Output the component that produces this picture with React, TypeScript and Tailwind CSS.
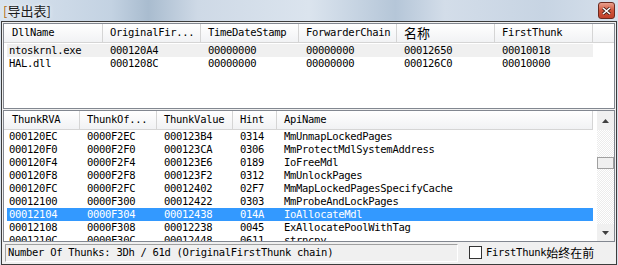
const mono = "font-['DejaVu_Sans_Mono',monospace] text-[10.5px] tracking-[-0.3px]";
const cjk = "font-['Noto_Sans_CJK_SC',sans-serif]";

const topCols = [
  { title: 'DllName', w: 99 },
  { title: 'OriginalFir...', w: 98 },
  { title: 'TimeDateStamp', w: 98 },
  { title: 'ForwarderChain', w: 98 },
  { title: '名称', w: 98, cjk: true },
  { title: 'FirstThunk', w: 98 },
];

const topRows = [
  ['ntoskrnl.exe', '000120A4', '00000000', '00000000', '00012650', '00010018'],
  ['HAL.dll', '0001208C', '00000000', '00000000', '000126C0', '00010000'],
];

const bottomCols = [
  { title: 'ThunkRVA', w: 76 },
  { title: 'ThunkOf...', w: 77 },
  { title: 'ThunkValue', w: 76 },
  { title: 'Hint', w: 44 },
  { title: 'ApiName', w: 316 },
];

const bottomRows = [
  ['000120EC', '0000F2EC', '000123B4', '0314', 'MmUnmapLockedPages'],
  ['000120F0', '0000F2F0', '000123CA', '0306', 'MmProtectMdlSystemAddress'],
  ['000120F4', '0000F2F4', '000123E6', '0189', 'IoFreeMdl'],
  ['000120F8', '0000F2F8', '000123F2', '0312', 'MmUnlockPages'],
  ['000120FC', '0000F2FC', '00012402', '02F7', 'MmMapLockedPagesSpecifyCache'],
  ['00012100', '0000F300', '00012422', '0303', 'MmProbeAndLockPages'],
  ['00012104', '0000F304', '00012438', '014A', 'IoAllocateMdl'],
  ['00012108', '0000F308', '00012238', '0045', 'ExAllocatePoolWithTag'],
  ['0001210C', '0000F30C', '00012448', '0611', 'strncpy'],
];
const selected = 6;

function Header({ cols, filler }: { cols: { title: string; w: number; cjk?: boolean }[]; filler?: boolean }) {
  return (
    <div className="flex h-[19px] shrink-0">
      {cols.map((c, i) => (
        <div
          key={c.title}
          style={{ width: c.w }}
          className={`h-full flex items-center shrink-0 overflow-hidden whitespace-nowrap bg-gradient-to-b from-white to-[#f1f2f4] border-r border-b border-[#d5d5d5] text-black ${
            i === 0 ? 'pl-[8px]' : 'pl-[7px]'
          } ${c.cjk ? `${cjk} text-[13px]` : mono}`}
        >
          {c.title}
        </div>
      ))}
      {filler && <div className="flex-1 h-full bg-gradient-to-b from-white to-[#f1f2f4] border-b border-[#d5d5d5]" />}
    </div>
  );
}

function Row({ cells, widths, bg, text }: { cells: string[]; widths: number[]; bg: string; text: string }) {
  return (
    <div className={`flex h-[13px] items-center ${mono} ${text}`}>
      {cells.map((c, i) => (
        <div
          key={i}
          style={{ width: i === 0 ? widths[i] - 3 : widths[i] }}
          className={`h-full flex items-center shrink-0 overflow-hidden whitespace-nowrap ${bg} ${i === 0 ? 'ml-[3px] pl-[2px]' : 'pl-[7px]'}`}
        >
          {c}
        </div>
      ))}
    </div>
  );
}

function ScrollBar() {
  return (
    <div className="w-[17px] h-full flex flex-col shrink-0 bg-[repeating-conic-gradient(#ececec_0_25%,#ffffff_0_50%)] bg-[length:2px_2px]">
      <div className="h-[19px] bg-[#f0f0f0] flex items-center justify-center">
        <svg width="7" height="4" viewBox="0 0 7 4">
          <path d="M3.5 0 L7 4 L0 4 Z" fill="#404040" />
        </svg>
      </div>
      <div className="h-[27px]" />
      <div className="h-[12px] bg-[#f0f0f0] border border-[#a0a0a0]" />
      <div className="flex-1" />
      <div className="h-[17px] bg-[#f0f0f0] flex items-center justify-center">
        <svg width="7" height="4" viewBox="0 0 7 4">
          <path d="M0 0 L7 0 L3.5 4 Z" fill="#404040" />
        </svg>
      </div>
    </div>
  );
}

export default function App() {
  const topW = topCols.map((c) => c.w);
  const botW = bottomCols.map((c) => c.w);
  return (
    <div className="w-[618px] h-[265px] flex flex-col overflow-hidden bg-[linear-gradient(90deg,#d9e3ee_0%,#c3d2e2_18%,#a9bccf_24%,#ced9e6_32%,#dbe4ee_50%,#b5c6d8_64%,#d3dde9_72%,#c7d4e3_88%,#d6e0eb_100%)]">
      {/* title bar */}
      <div className="h-[21px] shrink-0 flex items-center justify-between pl-[3px] pr-[3px]">
        <span className={`${cjk} text-[13px] leading-none text-[#1b1b1b] [text-shadow:0_0_4px_#ffffff]`}>
          <span className="text-[#b06a10]">[</span>导出表]
        </span>
        <div className="w-[17px] h-[17px] rounded-[3px] border border-[#6b2a20] bg-gradient-to-b from-[#e8a08e] via-[#d0553c] to-[#c0402a] flex items-center justify-center">
          <svg width="9" height="8" viewBox="0 0 9 8">
            <path d="M1 1 L8 7 M8 1 L1 7" stroke="#3a1a14" strokeWidth="3" />
            <path d="M1 1 L8 7 M8 1 L1 7" stroke="#ffffff" strokeWidth="1.6" />
          </svg>
        </div>
      </div>

      {/* window body */}
      <div className="mx-[1px] h-[244px] border border-[#3c3c3c] bg-[#f0f0f0] flex flex-col pt-[1px]">
        {/* top list */}
        <div className="mx-[1px] h-[86px] shrink-0 border border-[#828790] bg-white flex flex-col">
          <Header cols={topCols} filler />
          <div className="pt-[1px]">
            {topRows.map((r, i) => (
              <Row key={i} cells={r} widths={topW} bg={i === 0 ? 'bg-[#f0f0f0]' : ''} text="text-black" />
            ))}
          </div>
        </div>

        {/* bottom list */}
        <div className="mx-[1px] mt-[1px] h-[132px] shrink-0 border border-[#828790] bg-white flex">
          <div className="flex-1 flex flex-col overflow-hidden">
            <Header cols={bottomCols} />
            <div className="overflow-hidden">
              {bottomRows.map((r, i) => (
                <Row
                  key={i}
                  cells={r}
                  widths={botW}
                  bg={i === selected ? 'bg-[#3399ff]' : ''}
                  text={i === selected ? 'text-white' : 'text-black'}
                />
              ))}
            </div>
          </div>
          <ScrollBar />
        </div>

        {/* status bar */}
        <div className="h-[21px] shrink-0 flex items-center">
          <div className={`ml-[3px] w-[453px] h-[18px] flex items-center pl-[2px] border-t border-l border-[#a0a0a0] border-b border-r border-b-white border-r-white whitespace-nowrap overflow-hidden text-black ${mono}`}>
            Number Of Thunks: 3Dh / 61d (OriginalFirstThunk chain)
          </div>
          <div className="ml-[11px] w-[13px] h-[13px] border border-[#333333] bg-white shrink-0" />
          <span className={`ml-[4px] text-black ${mono}`}>FirstThunk</span>
          <span className={`${cjk} text-[12px] text-black`}>始终在前</span>
        </div>
      </div>
    </div>
  );
}
